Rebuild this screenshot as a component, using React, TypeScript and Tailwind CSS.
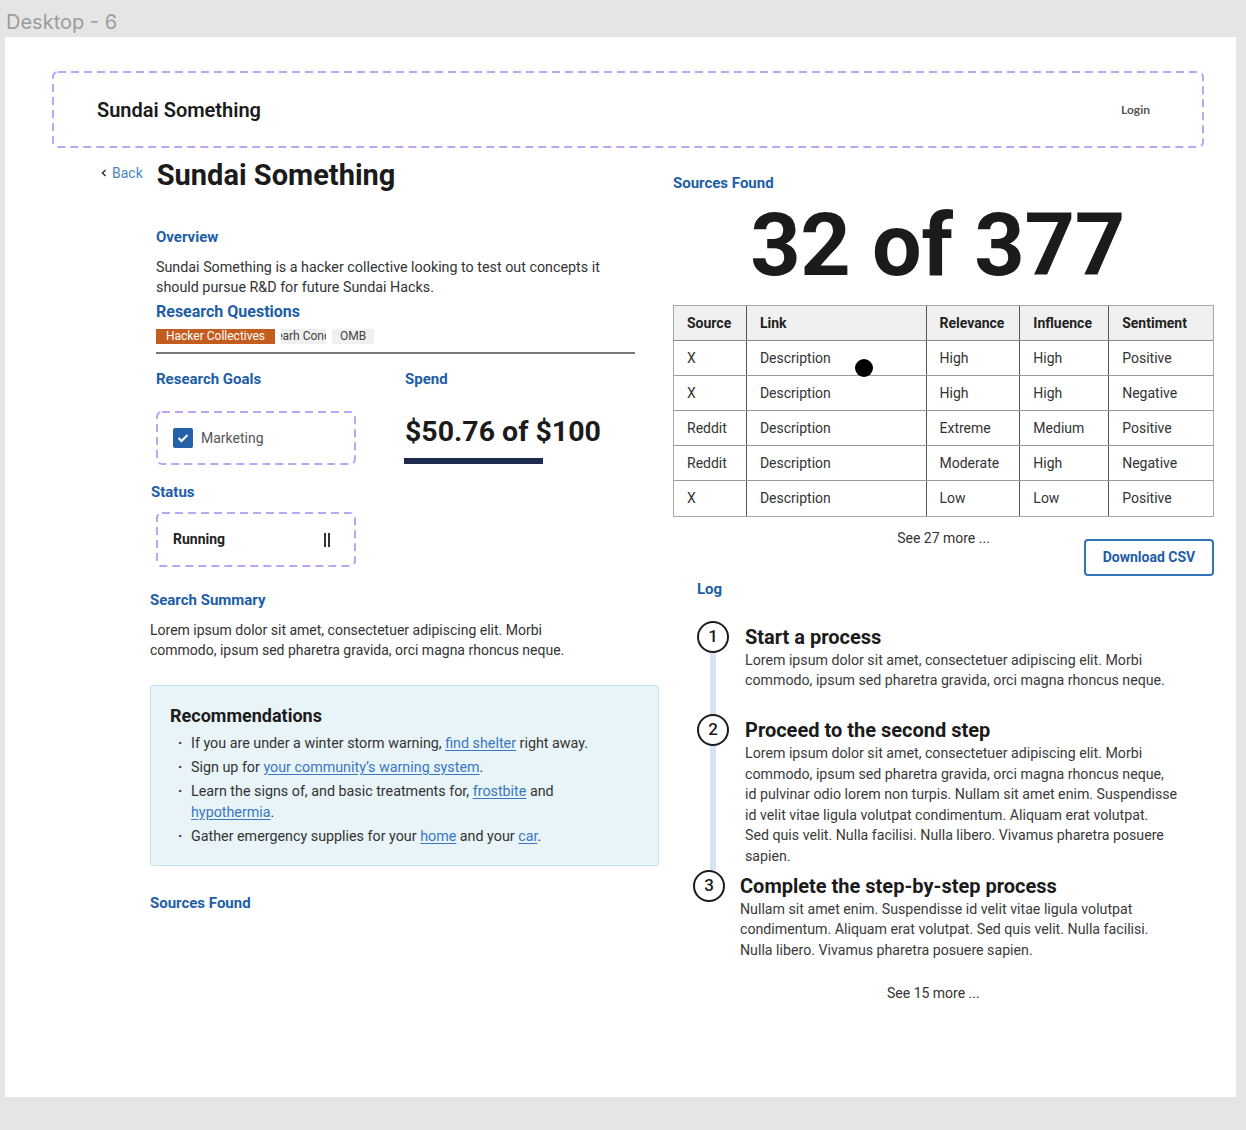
import React from "react";

const HEAD = "font-bold text-[15px] leading-5 text-[#1d5ea6]";
const BODY = "text-[14px] leading-5 text-[#333]";

function DashedBox({ className = "", children }: { className?: string; children: React.ReactNode }) {
  return (
    <div className={"relative " + className}>
      <svg className="absolute inset-[1px] w-[calc(100%-2px)] h-[calc(100%-2px)] overflow-visible pointer-events-none">
        <rect x="0" y="0" width="100%" height="100%" rx="5" ry="5" fill="none" stroke="#b9a7f6" strokeWidth="2" strokeDasharray="8 5" />
      </svg>
      {children}
    </div>
  );
}

function StepCircle({ n }: { n: number }) {
  return (
    <div className="w-[32px] h-[32px] rounded-full border-[2.5px] border-[#1b1b1b] flex items-center justify-center text-[17px] font-medium text-[#1b1b1b] bg-white shrink-0">
      {n}
    </div>
  );
}

const rows = [
  ["X", "Description", "High", "High", "Positive"],
  ["X", "Description", "High", "High", "Negative"],
  ["Reddit", "Description", "Extreme", "Medium", "Positive"],
  ["Reddit", "Description", "Moderate", "High", "Negative"],
  ["X", "Description", "Low", "Low", "Positive"],
];
const widths = ["w-[72px]", "w-[180px]", "w-[94px]", "w-[89px]", "w-[105px]"];

function Link({ children }: { children: React.ReactNode }) {
  return <span className="text-[#3a78c0] underline underline-offset-2 decoration-[#3a78c0]">{children}</span>;
}

function Bullet() {
  return <span className="w-[21px] pl-[8px] shrink-0 font-bold">·</span>;
}

export default function App() {
  return (
    <div className="w-[1246px] h-[1130px] bg-[#e5e5e5] overflow-hidden [font-family:Roboto,'Noto_Sans',sans-serif]">
      <div className="h-[37px] pl-[6px] pt-[7px] text-[20px] leading-[30px] text-[#9c9c9c] [font-family:Inter,sans-serif]">
        Desktop - 6
      </div>
      <div className="ml-[5px] w-[1231px] h-[1060px] bg-white pt-[34px]">
        {/* header */}
        <DashedBox className="ml-[47px] w-[1152px] h-[77px] flex items-center justify-between pl-[45px] pr-[54px]">
          <div className="text-[20px] font-semibold text-[#1b1b1b]">Sundai Something</div>
          <div className="text-[12px] font-bold text-[#555] [font-family:Lato,sans-serif]">Login</div>
        </DashedBox>

        <div className="flex ml-[95px]">
          {/* left column */}
          <div className="w-[573px]">
            <div className="mt-[9px] flex items-center h-[36px] pl-[1px]">
              <span className="text-[#4a86c5] text-[14px] flex items-center gap-[5px] mt-[-4px]">
                <svg width="6" height="8" viewBox="0 0 6 8"><path d="M4.5 1 L1.5 4 L4.5 7" stroke="#333" strokeWidth="1.5" fill="none" /></svg>
                Back
              </span>
              <span className="ml-[14px] text-[29px] font-bold text-[#1b1b1b] leading-9">Sundai Something</span>
            </div>

            <div className="pl-[50px]">
              <div className="ml-[6px]">
                <div className={HEAD + " mt-[34px]"}>Overview</div>
                <div className="text-[14.3px] leading-5 text-[#333] mt-[10px] whitespace-nowrap">
                  Sundai Something is a hacker collective looking to test out concepts it
                  <br />
                  should pursue R&amp;D for future Sundai Hacks.
                </div>
                <div className="font-bold text-[16px] leading-5 text-[#1d5ea6] mt-[5px]">Research Questions</div>
                <div className="mt-[7px] flex items-center gap-[6px] h-[15px] text-[12px]">
                  <span className="bg-[#c25d1e] text-white px-[10px] h-[15px] leading-[15px]">Hacker Collectives</span>
                  <span className="bg-[#f0f0f0] text-[#444] h-[15px] leading-[15px] w-[45px] overflow-hidden whitespace-nowrap">
                    <span className="inline-block -ml-[12px]">Searh Conc</span>
                  </span>
                  <span className="bg-[#f0f0f0] text-[#444] px-[8px] h-[15px] leading-[15px]">OMB</span>
                </div>
                <div className="mt-[8px] w-[479px] h-[2px] bg-[#7a7a7a]" />

                <div className="flex mt-[15px]">
                  <div className="w-[249px]">
                    <div className={HEAD}>Research Goals</div>
                    <DashedBox className="mt-[22px] w-[200px] h-[54px] flex items-center pl-[17px]">
                      <div className="w-[20px] h-[20px] rounded-[2px] bg-[#2561a8] flex items-center justify-center">
                        <svg width="12" height="10" viewBox="0 0 12 10"><path d="M1.5 5 L4.5 8 L10.5 2" stroke="white" strokeWidth="2" fill="none" /></svg>
                      </div>
                      <span className="ml-[8px] text-[14px] text-[#555]">Marketing</span>
                    </DashedBox>
                  </div>
                  <div>
                    <div className={HEAD}>Spend</div>
                    <div className="mt-[25px] text-[28.5px] font-bold leading-9 text-[#1b1b1b]">$50.76 of $100</div>
                    <div className="mt-[8px] w-[139px] h-[6px] bg-[#1c2a4d] -ml-[1px]" />
                  </div>
                </div>
              </div>

              <div className={HEAD + " mt-[17px] ml-[1px]"}>Status</div>
              <DashedBox className="ml-[6px] mt-[10px] w-[200px] h-[55px] flex items-center justify-between pl-[17px] pr-[26px]">
                <span className="text-[14px] font-bold text-[#222]">Running</span>
                <span className="flex gap-[2px]">
                  <span className="w-[2px] h-[14px] bg-[#333]" />
                  <span className="w-[2px] h-[14px] bg-[#333]" />
                </span>
              </DashedBox>

              <div className={HEAD + " mt-[23px]"}>Search Summary</div>
              <div className={BODY + " mt-[10px] whitespace-nowrap"}>
                Lorem ipsum dolor sit amet, consectetuer adipiscing elit. Morbi
                <br />
                commodo, ipsum sed pharetra gravida, orci magna rhoncus neque.
              </div>

              <div className="mt-[25px] w-[509px] h-[181px] bg-[#e8f4f8] border border-[#c2e4f0] rounded-[3px] pt-[18px] pl-[19px]">
                <div className="text-[18px] font-bold leading-6 text-[#1b1b1b]">Recommendations</div>
                <ul className="mt-[5px] text-[14.3px] leading-[21px] text-[#333] flex flex-col gap-[3px]">
                  <li className="flex"><Bullet /><span>If you are under a winter storm warning, <Link>find shelter</Link> right away.</span></li>
                  <li className="flex"><Bullet /><span>Sign up for <Link>your community’s warning system</Link>.</span></li>
                  <li className="flex"><Bullet /><span>Learn the signs of, and basic treatments for, <Link>frostbite</Link> and<br /><Link>hypothermia</Link>.</span></li>
                  <li className="flex"><Bullet /><span>Gather emergency supplies for your <Link>home</Link> and your <Link>car</Link>.</span></li>
                </ul>
              </div>

              <div className={HEAD + " mt-[27px]"}>Sources Found</div>
            </div>
          </div>

          {/* right column */}
          <div className="w-[541px]">
            <div className={HEAD + " mt-[25px]"}>Sources Found</div>
            <div className="mt-[2px] text-center text-[88px] font-bold leading-[100px] text-[#1b1b1b] tracking-[-0.3px] pr-[12px]">32 of 377</div>

            <div className="relative mt-[10px] w-[541px]">
              <div className="border border-[#a8a8a8] text-[14px] text-[#333]">
                <div className="flex bg-[#f0f0f0] h-[35px] font-bold text-[#222] border-b border-[#8a8a8a]">
                  {["Source", "Link", "Relevance", "Influence", "Sentiment"].map((h, i) => (
                    <div key={h} className={widths[i] + " flex items-center pl-[13px] " + (i > 0 ? "border-l-[1.5px] border-[#555]" : "")}>{h}</div>
                  ))}
                </div>
                {rows.map((r, ri) => (
                  <div key={ri} className={"flex h-[35px] " + (ri < rows.length - 1 ? "border-b border-[#9a9a9a]" : "")}>
                    {r.map((c, i) => (
                      <div key={i} className={widths[i] + " flex items-center pl-[13px] " + (i > 0 ? "border-l-[1.5px] border-[#555]" : "")}>{c}</div>
                    ))}
                  </div>
                ))}
              </div>
              <div className="absolute left-[182px] top-[54px] w-[18px] h-[18px] rounded-full bg-black" />
            </div>

            <div className="grid grid-cols-[1fr_auto_1fr]">
              <div />
              <div className="mt-[11px] text-[14px] leading-5 text-[#333]">See 27 more ...</div>
              <div className="justify-self-end mt-[22px] w-[130px] h-[37px] border-2 border-[#3272b8] rounded-[4px] flex items-center justify-center text-[14px] font-bold text-[#1d5ea6]">
                Download CSV
              </div>
            </div>

            <div className={HEAD + " mt-[3px] ml-[24px]"}>Log</div>

            <div className="ml-[24px] mt-[22px]">
              <div className="flex">
                <div className="flex flex-col items-center w-[32px]">
                  <StepCircle n={1} />
                  <div className="flex-1 w-[6px] bg-[#d5e3f5]" />
                </div>
                <div className="ml-[16px] pt-[4px] pb-[24px]">
                  <div className="text-[20px] font-bold leading-6 text-[#1b1b1b]">Start a process</div>
                  <div className="mt-[1px] text-[14.2px] leading-5 text-[#3a3a3a] whitespace-nowrap">
                    Lorem ipsum dolor sit amet, consectetuer adipiscing elit. Morbi
                    <br />
                    commodo, ipsum sed pharetra gravida, orci magna rhoncus neque.
                  </div>
                </div>
              </div>
              <div className="flex">
                <div className="flex flex-col items-center w-[32px]">
                  <StepCircle n={2} />
                  <div className="flex-1 w-[6px] bg-[#d5e3f5]" />
                </div>
                <div className="ml-[16px] pt-[4px] pb-[3px]">
                  <div className="text-[20px] font-bold leading-6 text-[#1b1b1b]">Proceed to the second step</div>
                  <div className="mt-[1px] text-[14.2px] leading-[20.6px] text-[#3a3a3a] whitespace-nowrap">
                    Lorem ipsum dolor sit amet, consectetuer adipiscing elit. Morbi
                    <br />
                    commodo, ipsum sed pharetra gravida, orci magna rhoncus neque,
                    <br />
                    id pulvinar odio lorem non turpis. Nullam sit amet enim. Suspendisse
                    <br />
                    id velit vitae ligula volutpat condimentum. Aliquam erat volutpat.
                    <br />
                    Sed quis velit. Nulla facilisi. Nulla libero. Vivamus pharetra posuere
                    <br />
                    sapien.
                  </div>
                </div>
              </div>
              <div className="flex -ml-[4px]">
                <div className="flex flex-col items-center w-[32px]">
                  <StepCircle n={3} />
                </div>
                <div className="ml-[15px] pt-[4px]">
                  <div className="text-[20px] font-bold leading-6 text-[#1b1b1b]">Complete the step-by-step process</div>
                  <div className="mt-[1px] text-[14.2px] leading-[20.6px] text-[#3a3a3a] whitespace-nowrap">
                    Nullam sit amet enim. Suspendisse id velit vitae ligula volutpat
                    <br />
                    condimentum. Aliquam erat volutpat. Sed quis velit. Nulla facilisi.
                    <br />
                    Nulla libero. Vivamus pharetra posuere sapien.
                  </div>
                </div>
              </div>
            </div>

            <div className="mt-[23px] ml-[214px] text-[14px] leading-5 text-[#333]">See 15 more ...</div>
          </div>
        </div>
      </div>
    </div>
  );
}
